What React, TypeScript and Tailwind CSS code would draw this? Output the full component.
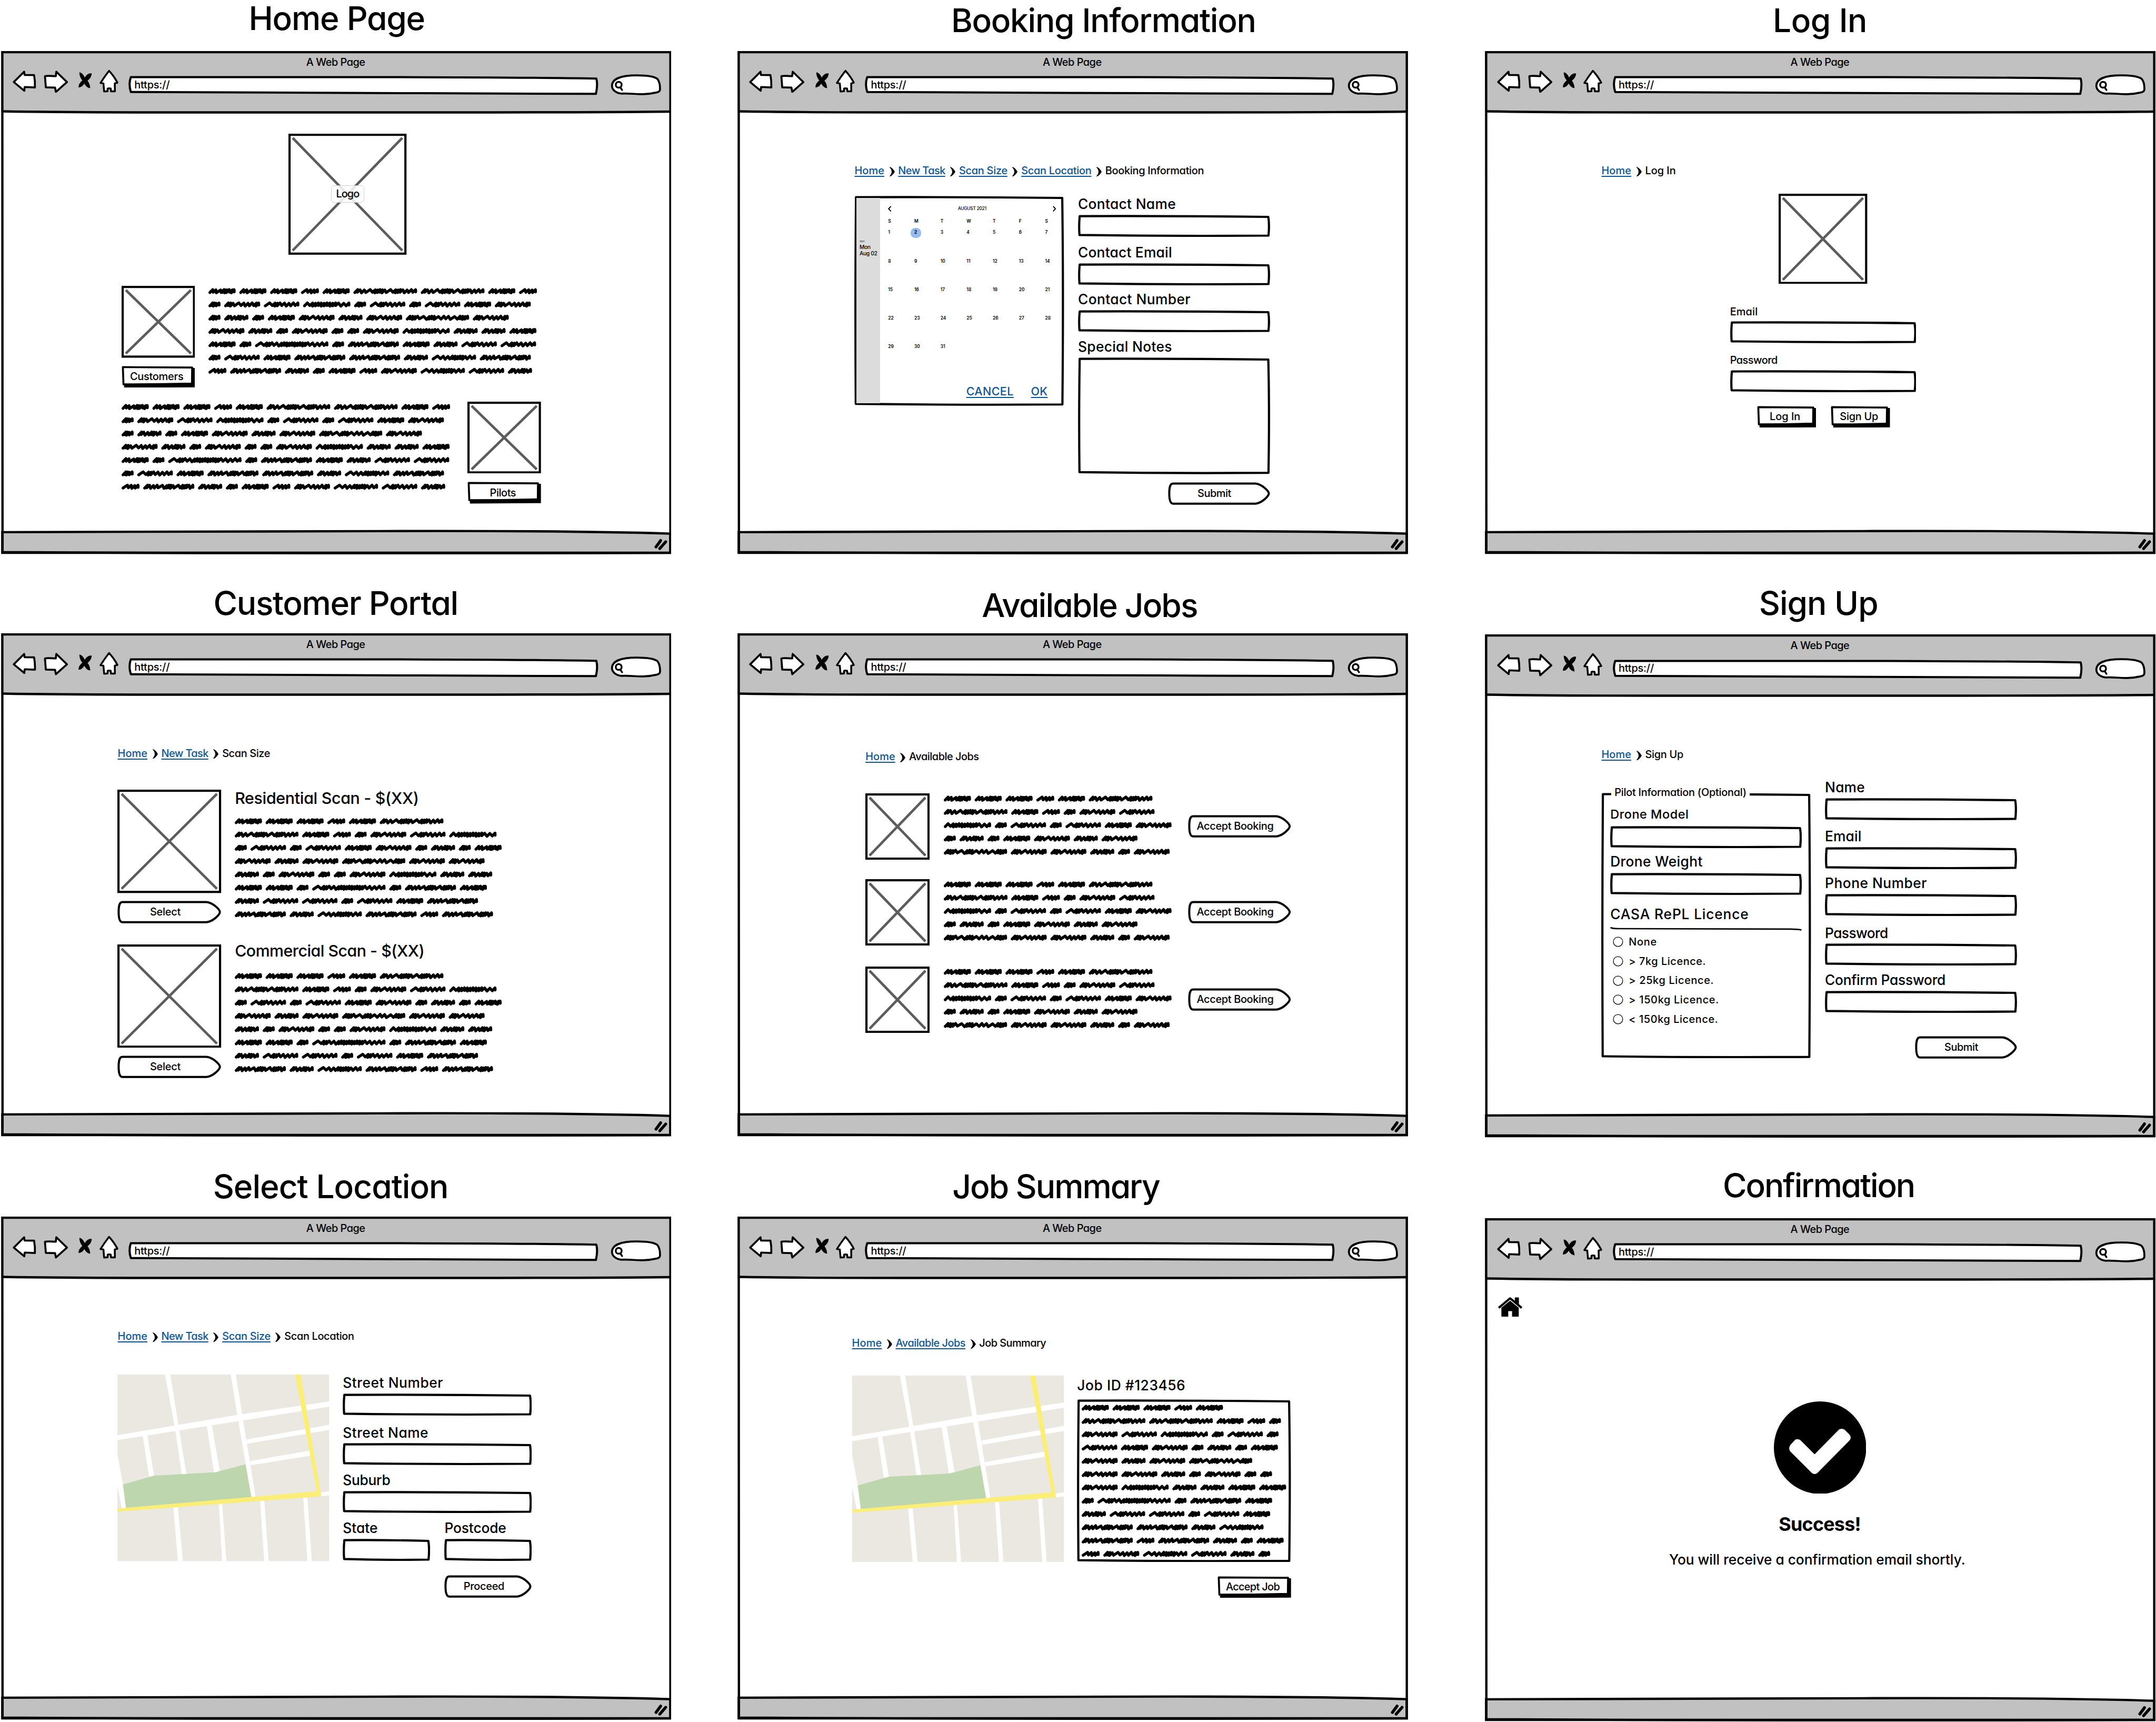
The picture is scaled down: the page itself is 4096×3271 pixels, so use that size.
import { useLayoutEffect, useRef } from "react";
import type { ReactNode } from "react";

/* ---------- text ---------- */

/** One line of text whose letter spacing is set so that it fills its box. */
function Line({ children, className = "" }: { children: string; className?: string }) {
  const outer = useRef<HTMLDivElement>(null);
  const inner = useRef<HTMLSpanElement>(null);
  useLayoutEffect(() => {
    const o = outer.current;
    const i = inner.current;
    if (!o || !i) return;
    i.style.letterSpacing = "0px";
    const width = parseFloat(getComputedStyle(o).width);
    const ratio = i.getBoundingClientRect().width / o.getBoundingClientRect().width;
    i.style.letterSpacing = `${((1 - ratio) * width) / children.length}px`;
  }, [children]);
  return (
    <div ref={outer} className={`shrink-0 whitespace-nowrap ${className}`}>
      <span ref={inner}>{children}</span>
    </div>
  );
}

const small = "text-[25px] leading-[36px]";
const label = "text-[33px] leading-[40px]";

/* ---------- sketched shapes ---------- */

function Stack({ children, className = "" }: { children: ReactNode; className?: string }) {
  return <div className={`grid shrink-0 *:[grid-area:1/1] ${className}`}>{children}</div>;
}

function Box({ w, h = 53 }: { w: number; h?: number }) {
  return (
    <svg width={w} height={h} className="block shrink-0" fill="white" stroke="black" strokeWidth={5.2} strokeLinejoin="round">
      <path
        d={`M4 3.2 Q${w / 2} 2.4 ${w - 4} 5 Q${w - 1} ${h * 0.45} ${w - 3.6} ${h - 3.5} Q${w / 2} ${h - 1.8} 3.5 ${h - 5} Q1.8 ${h / 2} 4 3.2Z`}
      />
    </svg>
  );
}

function Placeholder({ w, h }: { w: number; h: number }) {
  return (
    <svg width={w} height={h} className="block shrink-0">
      <rect x={2.6} y={2.6} width={w - 5.2} height={h - 5.2} fill="white" stroke="black" strokeWidth={5.2} />
      <path d={`M10 10 L${w - 10} ${h - 10} M${w - 10} 10 L10 ${h - 10}`} stroke="#5c5c5c" strokeWidth={6} />
    </svg>
  );
}

function ArrowButton({ w, text, textClass, pr }: { w: number; text: string; textClass: string; pr: string }) {
  const h = 54;
  return (
    <Stack>
      <svg width={w} height={h} className="block" fill="white" stroke="black" strokeWidth={5} strokeLinejoin="round">
        <path
          d={`M12 3 H${w - 35} C${w - 20} 4 ${w - 3} ${h / 2 - 6} ${w - 3} ${h / 2} C${w - 3} ${h / 2 + 6} ${w - 20} ${h - 4} ${w - 35} ${h - 3} H12 C4 ${h - 3} 3 ${h * 0.7} 3 ${h / 2} C3 ${h * 0.22} 5 3 12 3Z`}
        />
      </svg>
      <div className={`flex items-center justify-center ${pr}`}>
        <Line className={`${small} ${textClass}`}>{text}</Line>
      </div>
    </Stack>
  );
}

function PushButton({ w, text, textClass }: { w: number; text: string; textClass: string }) {
  const h = 52;
  return (
    <Stack>
      <svg width={w} height={h} className="block">
        <path d={`M6 ${h - 10} L6 ${h} L${w} ${h - 1} L${w} 5 L${w - 9} 5Z`} />
        <path
          d={`M3 3 L${w - 7} 4 L${w - 7.5} ${h - 10} Q${w / 2} ${h - 8} 4.5 ${h - 8}Z`}
          fill="white"
          stroke="black"
          strokeWidth={4.6}
          strokeLinejoin="round"
        />
      </svg>
      <div className="flex items-center justify-center pr-[7px]">
        <Line className={`${small} ${textClass}`}>{text}</Line>
      </div>
    </Stack>
  );
}

/* ---------- scribbled copy ---------- */

const words: Record<string, [number, string]> = {
  a: [65, "ssLdddsd"],
  t: [43, "Lss"],
  o: [29, "dds"],
  m: [86, "ddsLsssd"],
  n: [85, "Lddssss"],
  e: [58, "dssdds"],
  g: [113, "sdddddddddss"],
  r: [106, "Lssdddddss"],
  D: [122, "dsssLdddsLddds"],
  B: [152, "dssLddddsLdddsss"],
  C: [151, "dddsLdddLssLddd"],
  K: [175, "Lddssddddddddddssss"],
};
const strides: Record<string, number> = { s: 8, d: 4.4, L: 12.5 };

function scribble(key: string, x0: number, y: number) {
  const [width, pattern] = words[key];
  const total = [...pattern].reduce((sum, c) => sum + strides[c], 0);
  const k = (width - 14) / total;
  let x = x0 + 3.5;
  let d = `M${x.toFixed(1)} ${y + 3.4}`;
  [...pattern].forEach((c, i) => {
    const rise = c === "L" ? 10.5 : 6.8;
    d += `L${(x + rise).toFixed(1)} ${y - 3.6 + (i % 3) * 0.5}`;
    x += strides[c] * k;
    d += `L${x.toFixed(1)} ${y + 2.7 + ((i * 2) % 3) * 0.7}`;
  });
  return d + `L${(x + 6.6).toFixed(1)} ${y - 3.4}L${(x + 6.9).toFixed(1)} ${y + 1.8}`;
}

function Scribbles({ w, lines }: { w: number; lines: string[] }) {
  const d = lines
    .map((line, row) => {
      let x = 0;
      return [...line]
        .map((key) => {
          const path = scribble(key, x, row * 31.62 + 10);
          x += words[key][0] + 8.4;
          return path;
        })
        .join("");
    })
    .join("");
  return (
    <svg width={w} height={(lines.length - 1) * 31.62 + 20} className="block shrink-0">
      <path d={d} fill="none" stroke="black" strokeWidth={6.8} strokeLinecap="round" strokeLinejoin="round" />
    </svg>
  );
}

const homeCopy = ["aaataBBat", "omngononam", "oeoamemCm", "meomoomgeea", "aoKoDaenn", "onaDDerD", "tDeoatmrne"];
const scanCopy = ["aaataB", "Batomng", "ononamoeoa", "memCmm", "eomoomgee", "aaoKoDa", "ennonaD", "DerDtD"];
const jobCopy = ["aaataB", "Batomn", "gononam", "oeoamem", "Cmmeom"];
const summaryCopy = ["aaata", "BBato", "mngono", "namoeoa", "memC", "mmeomoo", "mgeeaa", "oKoDa", "ennona", "DDer", "DtDeoa", "tmrneo"];

/* ---------- breadcrumbs ---------- */

function Crumbs({ items }: { items: [string, string][] }) {
  return (
    <nav className="flex h-9 items-center">
      {items.map(([text, width], i) => {
        const last = i === items.length - 1;
        return (
          <div key={text} className="flex items-center">
            <Line
              className={`${small} ${width} ${last ? "" : "text-[#0b5699] underline decoration-[3px] underline-offset-[4px]"}`}
            >
              {text}
            </Line>
            {!last && (
              <svg width={13} height={23} viewBox="0 0 13 23" className="mt-1 mr-[8px] ml-3">
                <path d="M0.5 0 C6 2 10 7 12.500 11.500 C10 16 6 20.500 1.500 23 L0 22 C4 17 5 14 5 11.500 C5 8 3 4 0 1Z" />
              </svg>
            )}
          </div>
        );
      })}
    </nav>
  );
}

/* ---------- browser window ---------- */

function Toolbar() {
  return (
    <header className="h-[145px] bg-[#c1c1c1]">
      <div className="flex justify-center pt-[9px] pr-[2px]">
        <Line className={`${small} w-[140px]`}>A Web Page</Line>
      </div>
      <div className="flex">
        <svg width={60} height={56} viewBox="90 165 180 168" className="mt-[-1px] ml-[27px]" fill="white" stroke="black" strokeWidth={14} strokeLinejoin="round">
          <path d="M102 255 L176 181 L179 204 L247 205 Q255 250 253 293 L180 290 L177 317Z" />
        </svg>
        <svg width={60} height={56} viewBox="312 165 180 168" className="mt-[-1px] ml-[14px]" fill="white" stroke="black" strokeWidth={14} strokeLinejoin="round">
          <path d="M482 255 L406 181 L402 213 Q350 208 327 212 L325 214 L331 292 L397 294 L403 325Z" />
        </svg>
        <svg width={34} height={42} viewBox="560 180 102 126" className="mt-1 ml-[23px]">
          <path d="M570 186 Q592 186 609 222 Q630 188 659 193 Q658 222 629 245 Q646 265 648 298 Q622 298 606 266 Q588 296 564 292 Q566 262 592 243 Q572 222 570 186Z" />
        </svg>
        <svg width={48} height={57} viewBox="708 162 144 171" className="mt-[-2px] ml-[15px]" fill="white" stroke="black" strokeWidth={13} strokeLinejoin="round">
          <path d="M780 175 Q815 212 840 260 L821 265 L822 322 L794 322 L792 302 Q780 298 770 302 L770 321 L745 323 L740 265 L719 262 Q745 220 780 175Z" />
        </svg>
        <Stack className="mt-[12px] ml-[22px]">
          <svg width={1122} height={50} className="block" fill="white" stroke="black" strokeWidth={5} strokeLinejoin="round">
            <path d="M7 5.5 L650 5.5 Q950 6.5 1115 9 Q1119 24 1114 45.500 L700 44 Q300 42 7 41 Q1 22 7 5.500Z" />
          </svg>
          <Line className={`${small} mt-[6px] ml-[15px] w-[84px]`}>https://</Line>
        </Stack>
        <svg width={122} height={54} viewBox="222 226 366 162" className="mt-[9.5px] ml-[27px]" fill="white" stroke="black" strokeWidth={14} strokeLinejoin="round">
          <path d="M232 312 C232 266 290 238 410 238 C480 238 530 245 555 262 C575 285 576 315 575 340 C572 356 560 358 540 362 C500 372 470 373 440 372 C390 371 350 366 300 368 C260 365 232 340 232 312Z" />
          <circle cx={280} cy={305} r={21} strokeWidth={13} />
          <path d="M291 323 L304 342" strokeLinecap="round" strokeWidth={13} />
        </svg>
      </div>
    </header>
  );
}

function Chrome() {
  return (
    <svg width={1596} height={1198} className="pointer-events-none block" fill="none" stroke="black" strokeWidth={5.5}>
      <path d="M3 1145 Q400 1142 900 1142.500 Q1350 1141 1593 1148.500 L1593 1194 L3 1194Z" fill="#c1c1c1" />
      <path d="M3 143.500 Q150 146 400 146 L1000 146 Q1400 146 1593 144" />
      <path d="M3 2.700 L1593.300 2.700 L1593.300 1194 Q800 1197 3.500 1192.500 Q5 600 3 2.700Z" />
      <path d="M1559 1180 L1570 1165" strokeWidth={7} strokeLinecap="round" />
      <path d="M1568 1184 L1582 1168" strokeWidth={7} strokeLinecap="round" />
    </svg>
  );
}

function Screen({ title, titleClass, className = "", children }: { title: string; titleClass: string; className?: string; children: ReactNode }) {
  return (
    <section className={`w-[1596px] ${className}`}>
      <div className="flex h-[121px]">
        <Line className={`text-[78px] leading-[84px] ${titleClass}`}>{title}</Line>
      </div>
      <Stack>
        <Toolbar />
        <Chrome />
        <main className="mt-[146px] h-[995px]">{children}</main>
      </Stack>
    </section>
  );
}

/* ---------- form parts ---------- */

function Field({ text, textClass, w, h, className = "" }: { text: string; textClass: string; w: number; h?: number; className?: string }) {
  return (
    <div className={`flex flex-col gap-[5px] ${className}`}>
      <Line className={textClass}>{text}</Line>
      <Box w={w} h={h} />
    </div>
  );
}

function StreetMap() {
  return (
    <svg width={504} height={444} viewBox="30 304 760 1024" preserveAspectRatio="none" className="block shrink-0">
      <rect x={30} y={304} width={760} height={1024} fill="#ebe8e1" />
      <g fill="white">
        <path d="M30 637 L240 583 L470 523 L790 452 V480 L480 556 L30 664Z" />
        <path d="M201 304 H220 L250 590 L278 852 H261 L238 610Z" />
        <path d="M437 304 H455 L480 540 L526 976 L511 978 L462 540Z" />
        <path d="M121 640 H138 L162 862 L144 867Z" />
        <path d="M350 580 L368 575 L398 838 L377 843Z" />
        <path d="M495 660 L790 580 V608 L495 684Z" />
        <path d="M506 779 L722 721 V750 L509 802Z" />
        <path d="M30 740 L50 907 L61 1038 L46 1040 L30 915Z" />
        <path d="M755 952 L790 945 V967 L758 973Z" />
        <path d="M231 1030 H247 L265 1328 H247Z" />
        <path d="M394 1010 H406 L421 1328 H406Z" />
        <path d="M542 990 H557 L573 1328 H557Z" />
        <path d="M697 975 H712 L728 1328 H712Z" />
      </g>
      <path d="M50 907 L162 859 L380 841 L490 797 L511 977 L61 1036Z" fill="#bdd6ae" />
      <path d="M668 304 H688 L762 973 L30 1057 V1040 L746 945Z" fill="#faee76" />
    </svg>
  );
}

const weekdays = ["S", "M", "T", "W", "T", "F", "S"];
const days = Array.from({ length: 31 }, (_, i) => i + 1);

function Calendar() {
  return (
    <Stack className="w-[499px] grid-cols-[499px]">
      <Box w={499} h={500} />
      <div className="m-[5px] flex">
        <aside className="h-[489px] w-[56px] shrink-0 bg-[#dcdcdc] pt-[101px] pl-[7px]">
          <Line className="w-[12px] text-[5px] leading-[8px]">2021</Line>
          <Line className="w-[26px] text-[13px] leading-[17px]">Mon</Line>
          <Line className="w-[42px] text-[13px] leading-[16px]">Aug 02</Line>
        </aside>
        <div className="min-w-0 flex-1 pt-[18px] pl-[19px] text-[10.5px] font-semibold">
          <div className="flex h-4 w-[400px] items-center justify-between">
            <svg width={8} height={14} viewBox="0 0 8 14" fill="none" stroke="black" strokeWidth={2.4}>
              <path d="M7 1 L1.500 7 L7 13" />
            </svg>
            <Line className="w-[68px] text-[10.5px] leading-[16px] font-medium">AUGUST 2021</Line>
            <svg width={8} height={14} viewBox="0 0 8 14" fill="none" stroke="black" strokeWidth={2.4}>
              <path d="M1 1 L6.500 7 L1 13" />
            </svg>
          </div>
          <div className="mt-[14px] grid grid-cols-[repeat(7,62.3px)] leading-[16px]">
            {weekdays.map((d, i) => (
              <span key={i}>{d}</span>
            ))}
          </div>
          <div className="mt-[12px] grid auto-rows-[67.8px] grid-cols-[repeat(7,62.3px)] leading-[15px]">
            {days.map((d) =>
              d === 2 ? (
                <span key={d} className="-mt-[5px] -ml-[9px] grid size-[25px] place-items-center rounded-[11px] bg-[#94bbf2] font-bold">
                  2
                </span>
              ) : (
                <span key={d}>{d}</span>
              ),
            )}
          </div>
          <div className="mt-[28px] flex gap-[41px] pl-[186px] text-[27px] leading-[36px] font-medium text-[#0b5699] underline decoration-[3px] underline-offset-[4px]">
            <Line className="w-[113px]">CANCEL</Line>
            <Line className="w-[40px]">OK</Line>
          </div>
        </div>
      </div>
    </Stack>
  );
}

/* ---------- pages ---------- */

function HomePage() {
  return (
    <div className="flex flex-col pt-[51px] pl-[287px]">
      <Stack className="ml-[398px] w-[281px]">
        <Placeholder w={281} h={288} />
        <div className="flex h-[41px] w-[78px] items-center justify-center place-self-center rounded-lg border-2 border-[#cfcfcf] bg-white/85">
          <Line className={`${small} w-[55px]`}>Logo</Line>
        </div>
      </Stack>
      <div className="mt-[74.500px] flex gap-[32px]">
        <div className="flex flex-col gap-[19px]">
          <Placeholder w={175} h={171} />
          <PushButton w={175} text="Customers" textClass="w-[127px]" />
        </div>
        <div className="pt-[3px]">
          <Scribbles w={800} lines={homeCopy} />
        </div>
      </div>
      <div className="mt-[33.500px] flex gap-[24px]">
        <div className="pt-[3px]">
          <Scribbles w={800} lines={homeCopy} />
        </div>
        <div className="flex flex-col gap-[20px]">
          <Placeholder w={175} h={171} />
          <PushButton w={175} text="Pilots" textClass="w-[62px]" />
        </div>
      </div>
    </div>
  );
}

function BookingPage() {
  return (
    <div className="pt-[122px] pl-[279px]">
      <Crumbs
        items={[
          ["Home", "w-[71px]"],
          ["New Task", "w-[112px]"],
          ["Scan Size", "w-[115px]"],
          ["Scan Location", "w-[167px]"],
          ["Booking Information", "w-[235px]"],
        ]}
      />
      <div className="mt-[41px] flex gap-[33px]">
        <Calendar />
        <div className="flex flex-col">
          <Field text="Contact Name" textClass={`${label} w-[233px]`} w={457} />
          <Field className="mt-[17.500px]" text="Contact Email" textClass={`${label} w-[224px]`} w={457} />
          <Field className="mt-[14px]" text="Contact Number" textClass={`${label} w-[268px]`} w={457} />
          <Field className="mt-[14px]" text="Special Notes" textClass={`${label} w-[224px]`} w={457} h={278} />
          <div className="mt-[19.500px] flex justify-end">
            <ArrowButton w={243} text="Submit" textClass="w-[80px]" pr="pr-[22px]" />
          </div>
        </div>
      </div>
    </div>
  );
}

function LogInPage() {
  return (
    <div className="pt-[122px] pl-[277px]">
      <Crumbs
        items={[
          ["Home", "w-[71px]"],
          ["Log In", "w-[73px]"],
        ]}
      />
      <div className="mt-[36px] ml-[306px] flex w-[443px] flex-col">
        <div className="ml-[116px]">
          <Placeholder w={211} h={215} />
        </div>
        <Field className="mt-[48px]" text="Email" textClass={`${small} w-[66px]`} w={443} />
        <Field className="mt-[22px]" text="Password" textClass={`${small} w-[113px]`} w={443} />
        <div className="mt-[32px] flex gap-[35px] pl-[64px]">
          <PushButton w={141} text="Log In" textClass="w-[73px]" />
          <PushButton w={141} text="Sign Up" textClass="w-[91px]" />
        </div>
      </div>
    </div>
  );
}

function Scan({ title, titleClass, gap }: { title: string; titleClass: string; gap: string }) {
  return (
    <div className="flex gap-[32px]">
      <div className="flex flex-col gap-[18px]">
        <Placeholder w={247} h={246} />
        <ArrowButton w={247} text="Select" textClass="w-[73px]" pr="pr-[20px]" />
      </div>
      <div className={`flex flex-col ${gap}`}>
        <Line className={`text-[38px] leading-[40px] ${titleClass}`}>{title}</Line>
        <Scribbles w={650} lines={scanCopy} />
      </div>
    </div>
  );
}

function CustomerPortalPage() {
  return (
    <div className="pt-[122px] pl-[278px]">
      <Crumbs
        items={[
          ["Home", "w-[71px]"],
          ["New Task", "w-[112px]"],
          ["Scan Size", "w-[114px]"],
        ]}
      />
      <div className="mt-[69px] flex flex-col gap-[50px]">
        <Scan title="Residential Scan - $(XX)" titleClass="w-[438px] mt-[1px]" gap="gap-[24px]" />
        <Scan title="Commercial Scan - $(XX)" titleClass="w-[451px] -mt-[4px]" gap="gap-[29px]" />
      </div>
    </div>
  );
}

function AvailableJobsPage() {
  return (
    <div className="pt-[130px] pl-[305px]">
      <Crumbs
        items={[
          ["Home", "w-[71px]"],
          ["Available Jobs", "w-[166px]"],
        ]}
      />
      <div className="mt-[69px] grid grid-rows-[204px_208px_206px]">
        {[0, 1, 2].map((i) => (
          <div key={i} className="flex gap-[33px]">
            <Placeholder w={153} h={158} />
            <div className="pt-[3px]">
              <Scribbles w={549} lines={jobCopy} />
            </div>
            <div className="pt-[52px]">
              <ArrowButton w={245} text="Accept Booking" textClass="w-[183px]" pr="pr-[21px]" />
            </div>
          </div>
        ))}
      </div>
    </div>
  );
}

const licences: [string, string][] = [
  ["None", "w-[67px]"],
  ["> 7kg Licence.", "w-[184px]"],
  ["> 25kg Licence.", "w-[203px]"],
  ["> 150kg Licence.", "w-[215px]"],
  ["< 150kg Licence.", "w-[213px]"],
];

function SignUpPage() {
  return (
    <div className="pt-[122px] pl-[277px]">
      <Crumbs
        items={[
          ["Home", "w-[71px]"],
          ["Sign Up", "w-[91px]"],
        ]}
      />
      <div className="mt-[41px] flex gap-[33px]">
        <Stack className="mt-[32px]">
          <Box w={499} h={632} />
          <div className="flex flex-col pl-[21px]">
            <div className="-mt-[19px] ml-[2px] flex w-[330px] bg-white pl-[8px]">
              <Line className={`${small} w-[314px]`}>Pilot Information (Optional)</Line>
            </div>
            <Line className="mt-[14px] w-[187px] text-[29.500px] leading-[40px]">Drone Model</Line>
            <div className="mt-[8px]">
              <Box w={456} />
            </div>
            <Line className={`${label} mt-[12px] w-[220px]`}>Drone Weight</Line>
            <div className="mt-[7px]">
              <Box w={456} />
            </div>
            <Line className={`${label} mt-[26px] w-[330px]`}>CASA RePL Licence</Line>
            <svg width={456} height={10} className="mt-[8px] block" fill="none" stroke="black" strokeWidth={3.4} strokeLinecap="round">
              <path d="M2 3 Q8 5 20 5 L430 6 Q448 6 454 8" />
            </svg>
            <div className="mt-[9px] flex flex-col gap-[10px] pl-[6px]">
              {licences.map(([text, width]) => (
                <div key={text} className="flex items-center gap-[13px]">
                  <svg width={25} height={25} fill="white" stroke="black" strokeWidth={1.6}>
                    <circle cx={12.5} cy={12.5} r={11.2} />
                  </svg>
                  <Line className={`${small} ${width}`}>{text}</Line>
                </div>
              ))}
            </div>
          </div>
        </Stack>
        <div className="flex flex-col">
          <Field text="Name" textClass={`${label} w-[95px]`} w={457} />
          <Field className="mt-[17.500px]" text="Email" textClass={`${label} w-[87px]`} w={457} />
          <Field className="mt-[14.500px]" text="Phone Number" textClass={`${label} w-[243px]`} w={457} />
          <Field className="mt-[20px]" text="Password" textClass={`${label} w-[150px]`} w={457} />
          <Field className="mt-[14px]" text="Confirm Password" textClass={`${label} w-[287px]`} w={457} />
          <div className="mt-[55px] flex justify-end">
            <ArrowButton w={243} text="Submit" textClass="w-[80px]" pr="pr-[22px]" />
          </div>
        </div>
      </div>
    </div>
  );
}

function SelectLocationPage() {
  return (
    <div className="pt-[121px] pl-[278px]">
      <Crumbs
        items={[
          ["Home", "w-[71px]"],
          ["New Task", "w-[112px]"],
          ["Scan Size", "w-[115px]"],
          ["Scan Location", "w-[166px]"],
        ]}
      />
      <div className="mt-[73px] flex gap-[32px]">
        <StreetMap />
        <div className="flex w-[450px] flex-col">
          <Field text="Street Number" textClass={`${label} w-[239px]`} w={450} />
          <Field className="mt-[20px]" text="Street Name" textClass={`${label} w-[204px]`} w={450} />
          <Field className="mt-[15.500px]" text="Suburb" textClass={`${label} w-[113px]`} w={450} />
          <div className="mt-[16px] flex justify-between">
            <Field text="State" textClass={`${label} w-[83px]`} w={208} />
            <Field text="Postcode" textClass={`${label} w-[147px]`} w={208} />
          </div>
          <div className="mt-[33px] flex justify-end">
            <ArrowButton w={208} text="Proceed" textClass="w-[97px]" pr="pr-[20px]" />
          </div>
        </div>
      </div>
    </div>
  );
}

function JobSummaryPage() {
  return (
    <div className="pt-[137px] pl-[273px]">
      <Crumbs
        items={[
          ["Home", "w-[71px]"],
          ["Available Jobs", "w-[166px]"],
          ["Job Summary", "w-[159px]"],
        ]}
      />
      <div className="mt-[59px] flex gap-[32px]">
        <StreetMap />
        <div className="flex flex-col pt-[4px]">
          <Line className={`${label} w-[258px]`}>Job ID #123456</Line>
          <Stack className="mt-[12px]">
            <Box w={509} h={388} />
            <div className="pt-[10px] pl-[11px]">
              <Scribbles w={495} lines={summaryCopy} />
            </div>
          </Stack>
          <div className="mt-[33px] flex justify-end">
            <PushButton w={175} text="Accept Job" textClass="w-[128px]" />
          </div>
        </div>
      </div>
    </div>
  );
}

function ConfirmationPage() {
  return (
    <div className="flex flex-col pt-[42px]">
      <svg width={58} height={47} viewBox="9 361 80 82" preserveAspectRatio="none" className="ml-[31px] block">
        <path d="M20 405 L48.500 376 L77 405 V440 Q77 443 74 443 H55 V419 H42.500 V443 H23 Q20 443 20 440Z" />
        <path d="M9 402 L45 363.500 Q48.500 360 52 363.500 L64 376 V364 Q64 362 66 362 H75.500 Q77.500 362 77.500 364 V390 L89 402 L84.500 409 L48.500 371.500 L13.500 409Z" />
      </svg>
      <svg width={220} height={220} viewBox="0 0 220 220" className="mt-[201px] ml-[687px] block">
        <circle cx={110} cy={110} r={110} />
        <path
          d="M51 91 Q58 88 64 93 L97 126 L155 67 Q161 63 168 67 L180 79 Q185 85 181 92 L104 170 Q97 176 90 170 L39 119 Q34 112 39 104Z"
          fill="white"
        />
      </svg>
      <Line className="mt-[48px] ml-[699px] w-[195px] text-[45px] leading-[50px] font-bold">Success!</Line>
      <Line className={`${label} mt-[39px] ml-[438px] w-[705px]`}>You will receive a confirmation email shortly.</Line>
    </div>
  );
}

export default function App() {
  return (
    <div className="h-[3271px] w-[4096px] overflow-hidden bg-white">
      <div className="grid h-[4098px] w-[5132px] grid-cols-[1753px_1780px_1596px] grid-rows-[1386px_1389px_1320px] pl-[2px] font-['Inter','Liberation_Sans',sans-serif] font-medium text-black [font-feature-settings:'cv11','ss03'] [zoom:0.79813]">
        <Screen title="Home Page" titleClass="mt-px ml-[590px] w-[419px] text-[76px]">
          <HomePage />
        </Screen>
        <Screen title="Booking Information" titleClass="mt-[6px] ml-[509px] w-[725px]">
          <BookingPage />
        </Screen>
        <Screen title="Log In" titleClass="mt-[6px] ml-[685px] w-[224px]">
          <LogInPage />
        </Screen>
        <Screen title="Customer Portal" titleClass="mt-[7px] ml-[506px] w-[582px]">
          <CustomerPortalPage />
        </Screen>
        <Screen title="Available Jobs" titleClass="mt-[12px] ml-[582px] w-[513px]">
          <AvailableJobsPage />
        </Screen>
        <Screen title="Sign Up" titleClass="mt-[4px] ml-[652px] w-[283px]" className="mt-[3px]">
          <SignUpPage />
        </Screen>
        <Screen title="Select Location" titleClass="mt-[6px] ml-[505px] w-[560px]">
          <SelectLocationPage />
        </Screen>
        <Screen title="Job Summary" titleClass="mt-[6px] ml-[512px] w-[493px]">
          <JobSummaryPage />
        </Screen>
        <Screen title="Confirmation" titleClass="mt-px ml-[566px] w-[456px]" className="mt-[3px]">
          <ConfirmationPage />
        </Screen>
      </div>
    </div>
  );
}
